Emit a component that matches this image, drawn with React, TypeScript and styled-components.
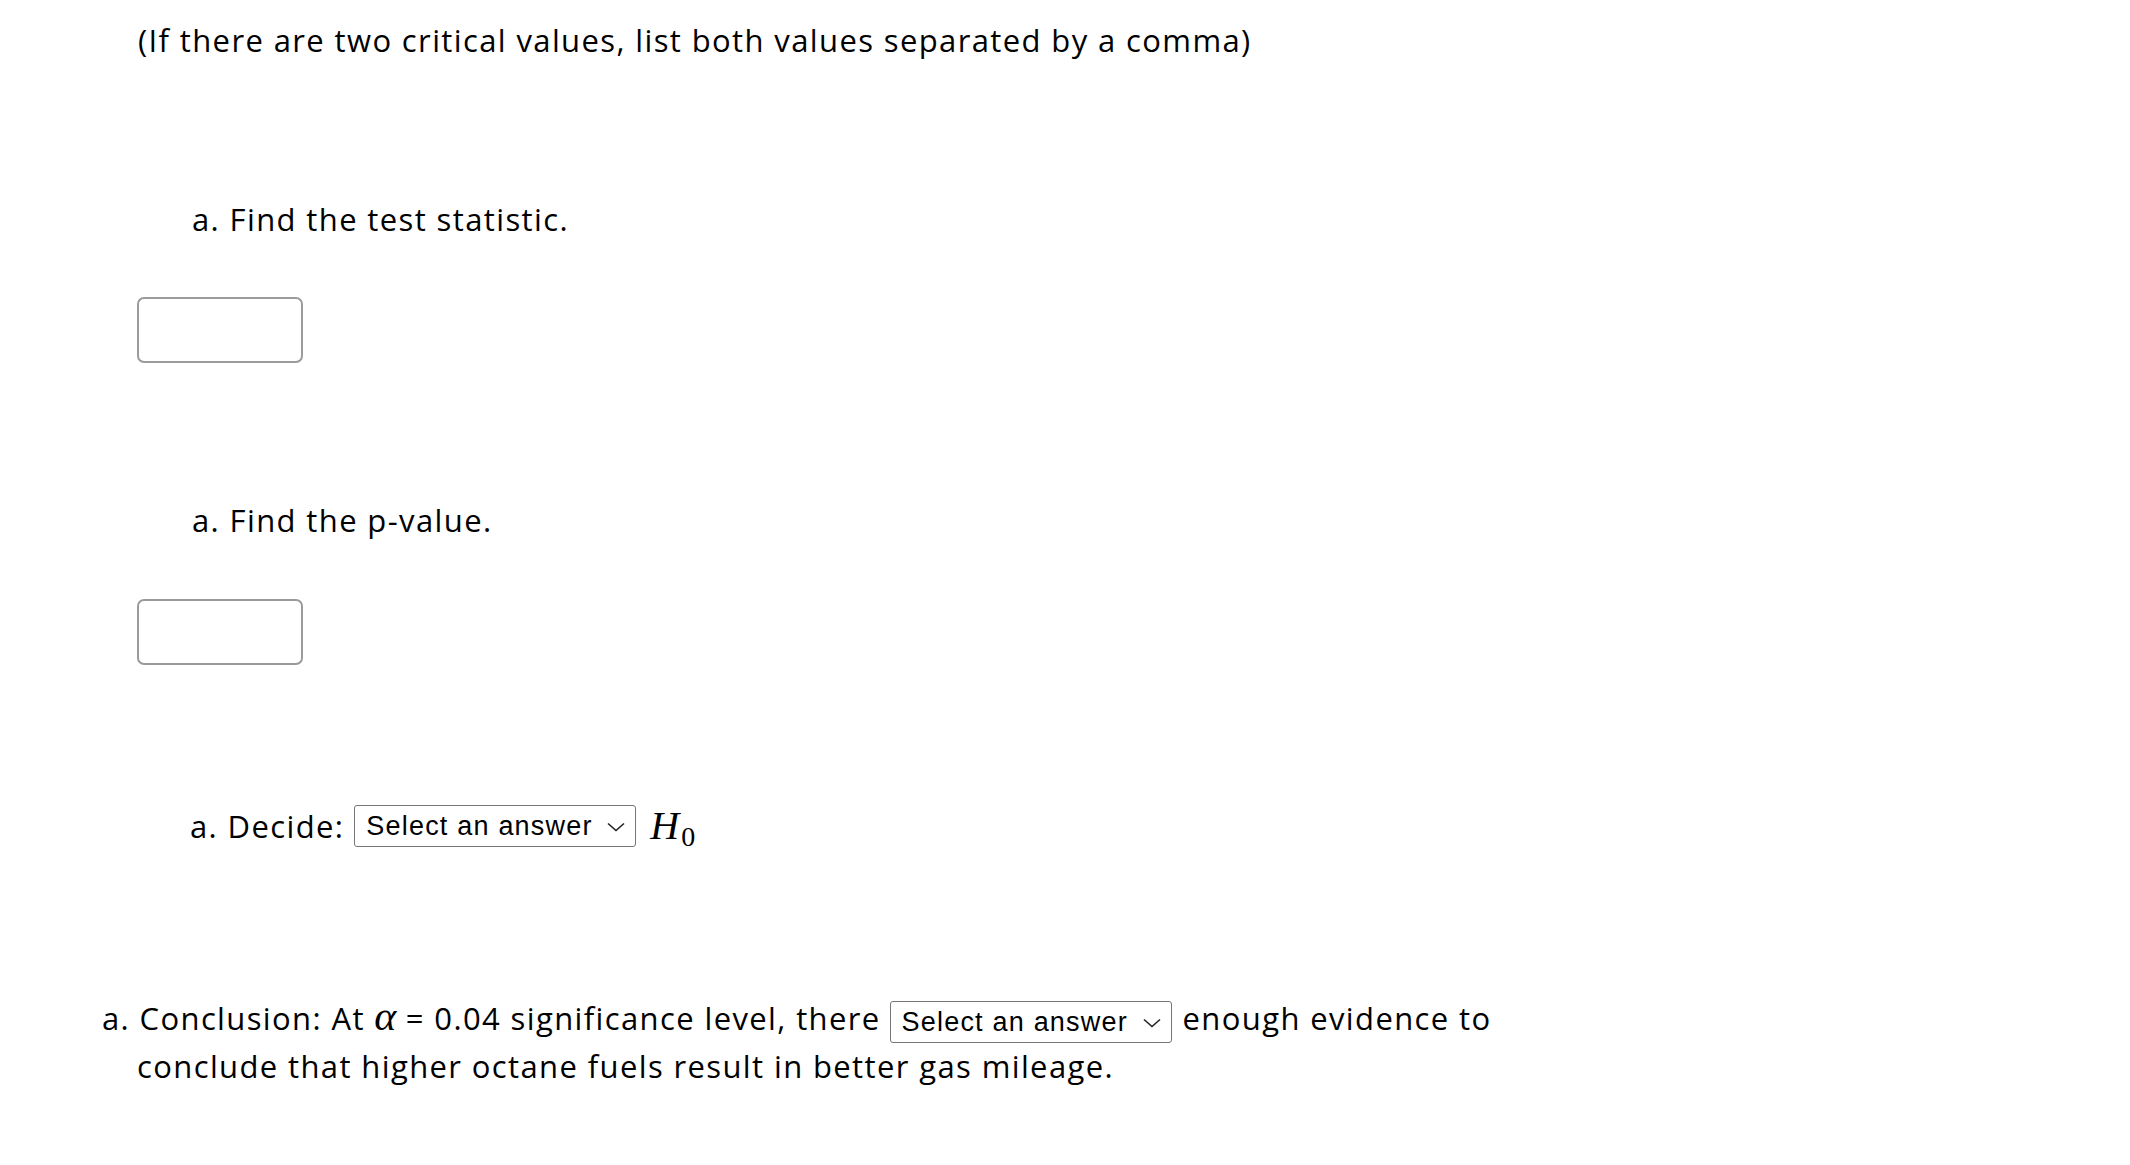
import React from "react";
import styled, { createGlobalStyle } from "styled-components";

const Global = createGlobalStyle`
  html, body { margin: 0; padding: 0; background: #fff; }
  body { font-family: "Open Sans", "Liberation Sans", sans-serif; color: #000; }
`;

const Page = styled.div`
  display: flex;
  flex-direction: column;
  align-items: flex-start;
  padding-top: 17px;
  width: 2130px;
  min-height: 1165px;
  box-sizing: border-box;
`;

const Text = styled.p<{ $left: number; $top: number }>`
  margin: ${(p) => p.$top}px 0 0 ${(p) => p.$left}px;
  font-size: 31px;
  line-height: 47px;
  letter-spacing: 1.38px;
  white-space: nowrap;
`;

const AnswerBox = styled.input.attrs({ type: "text" })<{ $top: number }>`
  margin: ${(p) => p.$top}px 0 0 137px;
  width: 166px;
  height: 66px;
  box-sizing: border-box;
  border: 2px solid #9b9b9b;
  border-radius: 7px;
  background: #fff;
  outline: none;
`;

const Row = styled.div<{ $left: number; $top: number }>`
  display: flex;
  align-items: center;
  margin: ${(p) => p.$top}px 0 0 ${(p) => p.$left}px;
  height: 47px;
  font-size: 31px;
  letter-spacing: 1.38px;
  white-space: nowrap;
`;

const SelectWrap = styled.span<{ $ml: number; $mr: number }>`
  position: relative;
  display: inline-block;
  vertical-align: middle;
  margin: 0 ${(p) => p.$mr}px 0 ${(p) => p.$ml}px;
  width: 282px;
  height: 42px;
  letter-spacing: 0;
  text-indent: 0;
  line-height: normal;
`;

const NativeSelect = styled.select`
  appearance: none;
  -webkit-appearance: none;
  display: block;
  width: 100%;
  height: 100%;
  box-sizing: border-box;
  border: 1.5px solid #767676;
  border-radius: 3px;
  background: #fff;
  color: #000;
  font-family: "Liberation Sans", Arial, sans-serif;
  font-size: 27px;
  letter-spacing: 1.2px;
  padding: 0 0 0 11px;
  margin: 0;
  outline: none;
  text-indent: 0;
`;

const Chevron = styled.svg`
  position: absolute;
  right: 11px;
  top: 17px;
  width: 18px;
  height: 10px;
  pointer-events: none;
`;

const MathH = styled.span`
  font-family: "Liberation Serif", "DejaVu Serif", serif;
  font-style: italic;
  font-size: 40px;
  letter-spacing: 0;
  line-height: 1;
  display: inline-flex;
  align-items: baseline;
`;

const Sub = styled.span`
  font-style: normal;
  font-size: 28px;
  margin-left: 2px;
  position: relative;
  top: 7px;
`;

const Conclusion = styled.p`
  margin: 146px 0 0 0;
  padding-left: 137px;
  text-indent: -35px;
  font-size: 31px;
  line-height: 47px;
  letter-spacing: 1.38px;
  white-space: nowrap;
`;

const Alpha = styled.span`
  font-family: "Liberation Serif", "DejaVu Serif", serif;
  font-style: italic;
  font-size: 42px;
  letter-spacing: 0;
  line-height: 0;
`;

function Select({ ml, mr }: { ml: number; mr: number }) {
  return (
    <SelectWrap $ml={ml} $mr={mr}>
      <NativeSelect defaultValue="">
        <option value="">Select an answer</option>
        <option value="reject">Reject</option>
        <option value="fail">Fail to reject</option>
      </NativeSelect>
      <Chevron viewBox="0 0 18 10" fill="none">
        <path d="M1 1.5 L9 8.5 L17 1.5" stroke="#222" strokeWidth="1.6" />
      </Chevron>
    </SelectWrap>
  );
}

export default function App() {
  return (
    <>
      <Global />
      <Page>
        <Text $left={138} $top={0}>
          (If there are two critical values, list both values separated by a comma)
        </Text>
        <Text $left={192} $top={132}>a. Find the test statistic.</Text>
        <AnswerBox $top={54} />
        <Text $left={192} $top={134}>a. Find the p-value.</Text>
        <AnswerBox $top={55} />
        <Row $left={190} $top={137}>
          a. Decide:
          <Select ml={10} mr={14} />
          <MathH>
            H<Sub>0</Sub>
          </MathH>
        </Row>
        <Conclusion>
          a. Conclusion: At <Alpha>α</Alpha> = 0.04 significance level, there
          <Select ml={9} mr={11} />
          enough evidence to
          <br />
          conclude that higher octane fuels result in better gas mileage.
        </Conclusion>
      </Page>
    </>
  );
}
